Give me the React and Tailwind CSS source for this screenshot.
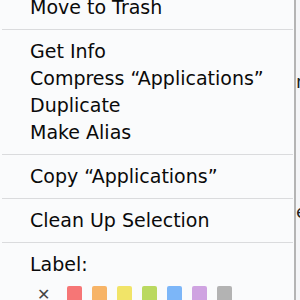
export default function App() {
  const font = { fontFamily: '"DejaVu Sans", "Liberation Sans", sans-serif' };
  const Item = ({ children }) => (
    <div className="h-[27px] leading-[27px] pl-[30px] text-[19px] text-[#0a0a0a] whitespace-nowrap">{children}</div>
  );
  const Sep = () => (
    <div className="h-[17px] flex items-center pl-[2px] pr-[1px]">
      <div className="h-px w-full bg-[#dadbdd]" />
    </div>
  );
  const swatches = [
    "bg-[#f67676]",
    "bg-[#f7b467]",
    "bg-[#f1e468]",
    "bg-[#bad960]",
    "bg-[#7cb6f8]",
    "bg-[#cfa3e1]",
    "bg-[#b3b3b3]",
  ];
  return (
    <div className="w-[300px] h-[300px] overflow-hidden flex bg-[#f4f5f7]" style={font}>
      <div className="w-[294px] h-full bg-[#fafbfc] overflow-hidden">
        <div className="mt-[-6px]">
          <Item>Move to Trash</Item>
          <Sep />
          <Item>Get Info</Item>
          <Item>Compress “Applications”</Item>
          <Item>Duplicate</Item>
          <Item>Make Alias</Item>
          <Sep />
          <Item>Copy “Applications”</Item>
          <Sep />
          <Item>Clean Up Selection</Item>
          <Sep />
          <Item>Label:</Item>
          <div className="flex items-start pl-[37px] pt-[8px] gap-[10px]">
            <span className="text-[16px] leading-[16px] font-bold text-[#444] w-[12px] mr-[8px] mt-[1px]">✕</span>
            {swatches.map((c) => (
              <div key={c} className={`w-[15px] h-[20px] rounded-[2px] ${c}`} />
            ))}
          </div>
        </div>
      </div>
      <div className="w-[2px] h-full bg-[#b4b4b4]" />
      <div className="flex-1 relative text-[18px] text-[#222]">
        <span className="absolute left-0 top-[68px]">r</span>
        <span className="absolute left-0 top-[198px]">e</span>
      </div>
    </div>
  );
}
